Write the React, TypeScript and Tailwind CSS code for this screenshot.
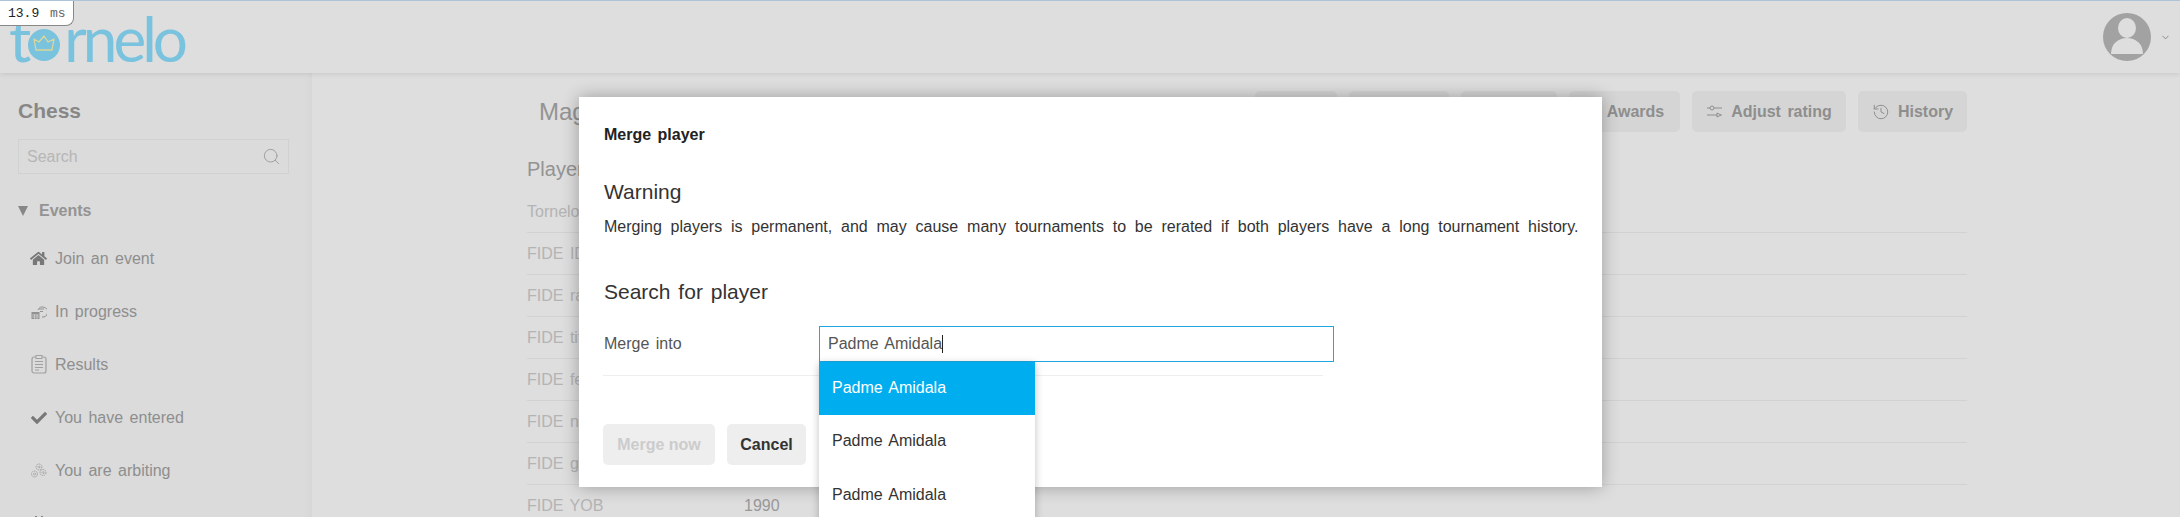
import React from "react";
import { FaHome, FaCheck, FaCalendarAlt, FaTrophy } from "react-icons/fa";
import { History, Search, ChevronDown } from "lucide-react";

const font = "font-['Liberation_Sans',Arial,sans-serif]";

function Logo() {
  return (
    <div className="flex items-baseline font-['Lato',sans-serif] font-normal text-[62px] leading-none tracking-[-4px] text-[#8de0ff] h-[72px] pt-[6px] pl-[9px]">
      <span>t</span>
      <svg width="32" height="32" viewBox="0 0 32 32" className="self-end mb-[12px] mr-[4px] ml-[1px]">
        <circle cx="16" cy="16" r="16" fill="#8de0ff" />
        <path d="M6 10l5 3 5-6 4 6 6-3-2 11H8z" fill="none" stroke="#fdf6b0" strokeWidth="1.3" strokeLinejoin="round" />
      </svg>
      <span>rnelo</span>
    </div>
  );
}

function Avatar() {
  return (
    <svg width="48" height="48" viewBox="0 0 48 48">
      <defs>
        <clipPath id="av"><circle cx="24" cy="24" r="24" /></clipPath>
      </defs>
      <circle cx="24" cy="24" r="24" fill="#bababa" />
      <g clipPath="url(#av)" fill="#ffffff">
        <ellipse cx="24" cy="15" rx="9" ry="10" />
        <path d="M8 41c0-11 8-16 16-16s16 5 16 16z" />
      </g>
    </svg>
  );
}

function ProgressIcon() {
  return (
    <svg width="16" height="16" viewBox="0 0 16 16" fill="none" stroke="currentColor">
      <path d="M7 6a5 5 0 1 1 4 7" strokeWidth="1" />
      <path d="M8 5h5M9 7.500h3" strokeWidth="1" />
      <rect x="0.500" y="8" width="8" height="7" fill="currentColor" stroke="none" />
      <path d="M1 11h7M1 13h7M3.500 10v5M6 10v5" stroke="#ffffff" strokeWidth="0.600" />
    </svg>
  );
}

function ResultsIcon() {
  return (
    <svg width="16" height="19" viewBox="0 0 16 19" fill="none" stroke="currentColor" strokeWidth="1">
      <rect x="1" y="2" width="14" height="16" rx="2" strokeWidth="1.200" />
      <rect x="5" y="0.500" width="6" height="3" fill="#ffffff" />
      <path d="M4 6.500h8M4 9.500h8M4 12.500h8M4 15h4" />
    </svg>
  );
}

function GearsIcon() {
  return (
    <svg width="16" height="16" viewBox="0 0 16 16" fill="none" stroke="currentColor" strokeWidth="1" strokeDasharray="1.500 0.700">
      <circle cx="8" cy="4" r="3" />
      <circle cx="3.500" cy="11" r="3" />
      <circle cx="12" cy="9.500" r="3" />
      <circle cx="8" cy="4" r="1" />
      <circle cx="3.500" cy="11" r="1" />
      <circle cx="12" cy="9.500" r="1" />
    </svg>
  );
}

function SlidersIcon() {
  return (
    <svg width="17" height="14" viewBox="0 0 17 14" fill="none" stroke="currentColor" strokeWidth="1">
      <path d="M1 3h3M8 3h8M1 10h10M15 10h1" />
      <circle cx="6" cy="3" r="2" />
      <path d="M11 8l4 2-4 2z" />
    </svg>
  );
}

const navItems: [React.ReactNode, string, string][] = [
  [<FaHome size={17} />, "Join an event", "text-[#8a8a8a]"],
  [<ProgressIcon />, "In progress", "text-[#a8a8a8]"],
  [<ResultsIcon />, "Results", "text-[#b8b8b8]"],
  [<FaCheck size={16} />, "You have entered", "text-[#8a8a8a]"],
  [<GearsIcon />, "You are arbiting", "text-[#b8b8b8]"],
  [<FaCalendarAlt size={16} />, "All events", "text-[#8a8a8a]"],
];

const rows: [string, string][] = [
  ["Tornelo ID", "1024"],
  ["FIDE ID", "1503014"],
  ["FIDE rating", "2847"],
  ["FIDE title", "GM"],
  ["FIDE federation", "NOR"],
  ["FIDE name", "Carlsen, Magnus"],
  ["FIDE gender", "Male"],
  ["FIDE YOB", "1990"],
];

function TopButton({ w, icon, label }: { w: string; icon?: React.ReactNode; label: string }) {
  return (
    <div className={`${w} h-[41px] shrink-0 rounded-[5px] bg-[#f5f5f5] flex items-center justify-center gap-[8px] text-[16px] font-bold text-[#a4a4a4]`}>
      {icon}
      <span>{label}</span>
    </div>
  );
}

export default function App() {
  return (
    <div className={`${font} relative h-[517px] w-[2180px] overflow-hidden bg-white [word-spacing:2px] text-[#333333]`}>
      {/* page underneath */}
      <div className="h-[73px] bg-white border-t border-[#c9e0f7] shadow-[0_1px_5px_rgba(0,0,0,0.1)] relative z-10 flex items-start justify-between">
        <Logo />
        <div className="flex items-center gap-[9px] pt-[12px] pr-[9px] text-[#999999]">
          <Avatar />
          <ChevronDown size={11} />
        </div>
      </div>
      <div className="flex h-[444px]">
        <aside className="w-[312px] shrink-0 bg-[#fcfcfc] pl-[18px] pr-[23px] pt-[23px] shadow-[inset_-10px_0_8px_-8px_rgba(0,0,0,0.03)]">
          <div className="text-[21px] font-bold leading-[29px] text-[#9c9c9c]">Chess</div>
          <div className="mt-[14px] h-[35px] w-[271px] border border-[#f0f0f0] flex items-center justify-between pl-[8px] pr-[7px] text-[16px] text-[#d2d2d2]">
            <span>Search</span>
            <Search size={19} strokeWidth={1.200} className="text-[#b4b4b4]" />
          </div>
          <div className="mt-[26px] flex items-center gap-[11px] text-[16px] font-bold text-[#aaaaaa] h-[22px]">
            <span className="block w-0 h-0 border-x-[5.500px] border-x-transparent border-t-[10px] border-t-[#9c9c9c]" />
            <span>Events</span>
          </div>
          <ul className="mt-[10px]">
            {navItems.map(([icon, label, tone]) => (
              <li key={label} className="h-[53px] flex items-center pl-[13px] text-[16px] text-[#a4a4a4]">
                <span className={`w-[24px] flex justify-center -ml-[1px] mr-[1px] pr-[7px] ${tone}`}>{icon}</span>
                <span>{label}</span>
              </li>
            ))}
          </ul>
        </aside>
        <main className="flex-1 min-w-0 pl-[215px] w-0 bg-white">
          <div className="w-[1440px] flex items-center justify-between pt-[18px]">
            <h1 className="pl-[12px] text-[24px] text-[#aaaaaa]">Magnus Carlsen</h1>
            <div className="flex gap-[12px]">
              <TopButton w="w-[82px]" label="Edit" />
              <TopButton w="w-[100px]" label="Merge" />
              <TopButton w="w-[96px]" label="Email" />
              <TopButton w="w-[111px]" icon={<FaTrophy size={14} />} label="Awards" />
              <TopButton w="w-[154px]" icon={<SlidersIcon />} label="Adjust rating" />
              <TopButton w="w-[109px]" icon={<History size={18} strokeWidth={1.300} />} label="History" />
            </div>
          </div>
          <h2 className="mt-[22px] text-[20px] leading-[30px] text-[#aaaaaa]">Player</h2>
          <dl className="mt-[7px] w-[1440px] text-[16px]">
            {rows.map(([k, v]) => (
              <div key={k} className="h-[42px] flex items-center border-b border-[#f2f2f2]">
                <dt className="w-[217px] text-[#cfcfcf]">{k}</dt>
                <dd className="text-[#b0b0b0]">{v}</dd>
              </div>
            ))}
          </dl>
        </main>
      </div>

      {/* backdrop */}
      <div className="absolute inset-0 z-20 bg-[rgba(0,0,0,0.13)]" />

      {/* fps tag */}
      <div className="absolute left-0 top-[1px] z-40 w-[74px] h-[25px] bg-white border-r border-b border-[#888888] rounded-br-[8px] font-['Liberation_Mono',monospace] text-[13px] leading-[25px] pl-[8px] [word-spacing:3px] text-[#222222]">
        13.9 <span className="text-[#666666]">ms</span>
      </div>

      {/* modal */}
      <div className="absolute left-[579px] top-[97px] z-30 w-[1023px] h-[390px] bg-white shadow-[0_0_16px_rgba(0,0,0,0.3)] px-[25px]">
        <div className="pt-[29px] text-[16px] leading-[18px] font-bold text-[#222222]">Merge player</div>
        <h3 className="mt-[36px] text-[21px] leading-[24px] text-[#333333]">Warning</h3>
        <p className="mt-[13px] text-[16px] leading-[20px] whitespace-nowrap text-[#333333] [word-spacing:4.35px]">
          Merging players is permanent, and may cause many tournaments to be rerated if both players have a long tournament history.
        </p>
        <h3 className="mt-[43px] text-[21px] leading-[24px] text-[#333333]">Search for player</h3>
        <div className="mt-[22px] w-[720px] h-[50px] border-b border-[#eeeeee] flex items-start -ml-[1px]">
          <label className="w-[216px] shrink-0 h-[36px] flex items-center text-[16px] pl-[1px] text-[#555555]">Merge into</label>
          <div className="relative shrink-0">
            <div className="w-[515px] h-[36px] border border-[#1ea7e0] flex items-center pl-[8px] text-[16px] text-[#555555] bg-white">
              <span>Padme Amidala</span>
              <span className="w-[1px] h-[18px] bg-[#222222]" />
            </div>
            <ul className="absolute left-0 top-[36px] w-[216px] h-[200px] bg-white shadow-[0_2px_8px_rgba(0,0,0,0.25)] text-[16px] text-[#333333]">
              <li className="h-[53px] flex items-center pl-[13px] pb-[1px] bg-[#00aeef] text-white">Padme Amidala</li>
              <li className="h-[53px] flex items-center pl-[13px] pb-[1px]">Padme Amidala</li>
              <li className="h-[53px] flex items-center pl-[13px]">Padme Amidala</li>
            </ul>
          </div>
        </div>
        <div className="mt-[48px] flex gap-[12px] -ml-[1px]">
          <button className="w-[112px] h-[41px] rounded-[5px] bg-[#eeeeee] text-[16px] font-bold text-[#cccccc]">Merge now</button>
          <button className="w-[79px] h-[41px] rounded-[5px] bg-[#eeeeee] text-[16px] font-bold text-[#333333]">Cancel</button>
        </div>
      </div>
    </div>
  );
}
